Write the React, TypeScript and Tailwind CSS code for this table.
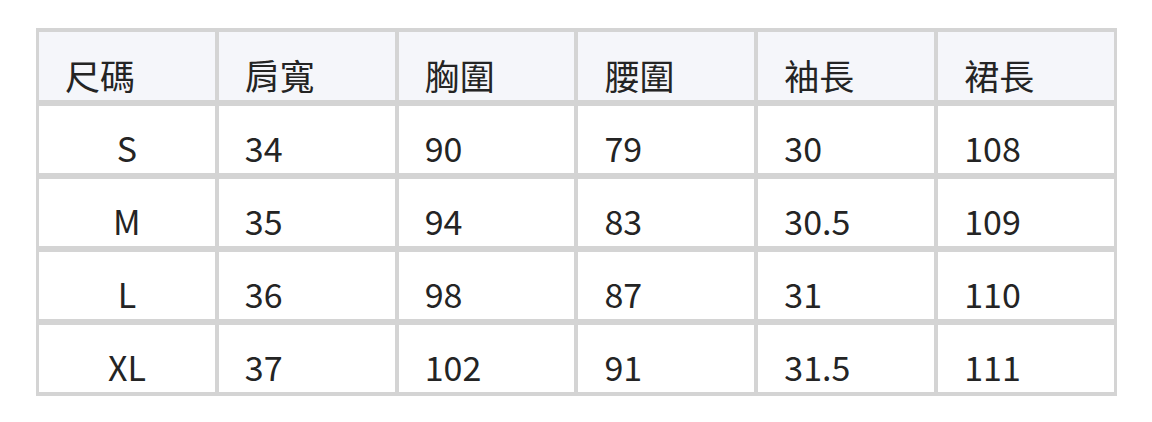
import * as React from "react";

const HEADERS = ["尺碼", "肩寬", "胸圍", "腰圍", "袖長", "裙長"];

const ROWS = [
  ["S", "34", "90", "79", "30", "108"],
  ["M", "35", "94", "83", "30.5", "109"],
  ["L", "36", "98", "87", "31", "110"],
  ["XL", "37", "102", "91", "31.5", "111"],
];

export default function App() {
  return (
    <div
      className="min-h-[422px] bg-white pl-[36px] pt-[28px] text-[#242424]"
      style={{ fontFamily: '"Noto Sans CJK TC", "Noto Sans", sans-serif' }}
    >
      <table className="w-[1081px] table-fixed border-separate border-spacing-0 border border-[#d4d4d4] text-[34px] leading-[34px]">
        <thead>
          <tr>
            {HEADERS.map((h) => (
              <th
                key={h}
                className="h-[74px] border-x-2 border-y-[3px] border-[#d4d4d4] bg-[#f5f6fa] pl-[26px] pt-[26px] pb-[8px] text-left align-top text-[35px] font-normal"
              >
                {h}
              </th>
            ))}
          </tr>
        </thead>
        <tbody>
          {ROWS.map((row) => (
            <tr key={row[0]}>
              {row.map((cell, i) => (
                <td
                  key={i}
                  className={
                    i === 0
                      ? "h-[73px] border-x-2 border-y-[3px] border-[#d4d4d4] pt-[25px] pb-[8px] text-center align-top"
                      : "h-[73px] border-x-2 border-y-[3px] border-[#d4d4d4] pl-[26px] pt-[25px] pb-[8px] text-left align-top"
                  }
                >
                  {cell}
                </td>
              ))}
            </tr>
          ))}
        </tbody>
      </table>
    </div>
  );
}
